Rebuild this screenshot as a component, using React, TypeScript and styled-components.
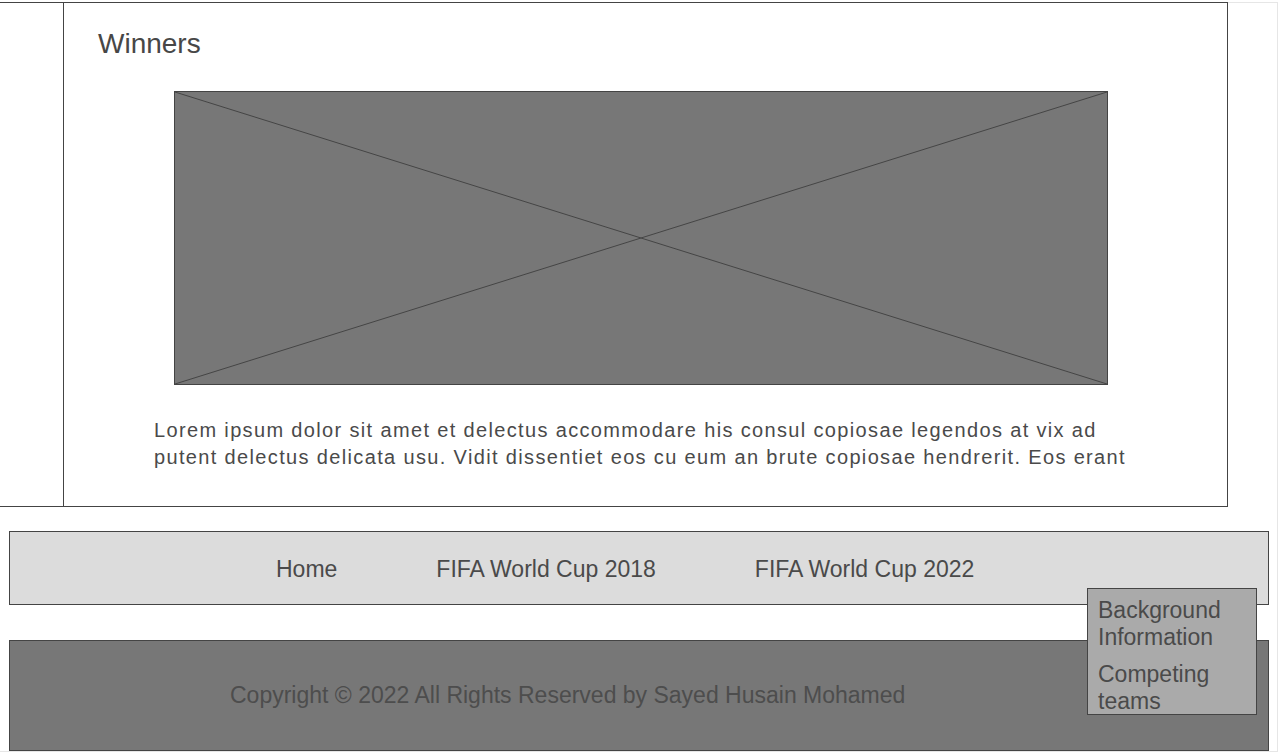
import styled, { createGlobalStyle } from "styled-components";

const GlobalStyle = createGlobalStyle`
  html, body {
    margin: 0;
    padding: 0;
    background: #ffffff;
    overflow: hidden;
  }
  body {
    font-family: "Liberation Sans", Arial, sans-serif;
    color: #4a4a4a;
  }
  * {
    box-sizing: border-box;
  }
`;

const navLinks = ["Home", "FIFA World Cup 2018", "FIFA World Cup 2022"];
const dropdownLinks = ["Background Information", "Competing teams"];

const App = () => {
  return (
    <>
      <GlobalStyle />
      <Page>
        <MainPanel>
          <Sidebar />
          <Content>
            <Heading>Winners</Heading>
            <Placeholder>
              <svg width="100%" height="100%" viewBox="0 0 932 292" preserveAspectRatio="none">
                <line x1="0" y1="0" x2="932" y2="292" stroke="#454545" strokeWidth="1" />
                <line x1="932" y1="0" x2="0" y2="292" stroke="#454545" strokeWidth="1" />
              </svg>
            </Placeholder>
            <Paragraph>
              Lorem ipsum dolor sit amet et delectus accommodare his consul copiosae legendos at vix ad putent
              delectus delicata usu. Vidit dissentiet eos cu eum an brute copiosae hendrerit. Eos erant
            </Paragraph>
          </Content>
        </MainPanel>

        <NavBar>
          {navLinks.map((link) => (
            <NavLink key={link}>{link}</NavLink>
          ))}
          <Dropdown>
            {dropdownLinks.map((link) => (
              <DropdownItem key={link}>{link}</DropdownItem>
            ))}
          </Dropdown>
        </NavBar>

        <Footer>
          <Copyright>Copyright © 2022 All Rights Reserved by Sayed Husain Mohamed</Copyright>
        </Footer>
      </Page>
    </>
  );
};

export default App;

const Page = styled.div`
  width: 1278px;
  height: 750px;
  margin-top: 2px;
  border-top: 1px solid #e6e6e6;
  border-right: 1px solid #e6e6e6;
  border-bottom: 1px solid #e6e6e6;
`;

const MainPanel = styled.section`
  display: grid;
  grid-template-columns: 64px 1fr;
  width: 1229px;
  height: 505px;
  margin-top: -1px;
  margin-left: -1px;
  border: 1px solid #444444;
  overflow: hidden;
`;

const Sidebar = styled.aside`
  border-right: 1px solid #444444;
`;

const Content = styled.div`
  display: flex;
  flex-direction: column;
  padding: 25px 0 0 34px;
  overflow: hidden;
`;

const Heading = styled.h1`
  margin: 0;
  font-size: 28px;
  font-weight: normal;
  line-height: 32px;
  color: #474747;
`;

const Placeholder = styled.div`
  width: 934px;
  height: 294px;
  margin: 31px 0 0 76px;
  background: #777777;
  border: 1px solid #444444;

  svg {
    display: block;
  }
`;

const Paragraph = styled.p`
  width: 1000px;
  margin: 32px 0 0 56px;
  font-size: 20px;
  letter-spacing: 1.35px;
  line-height: 27px;
  color: #4a4a4a;
`;

const NavBar = styled.nav`
  position: relative;
  display: flex;
  align-items: center;
  gap: 99px;
  width: 1260px;
  height: 74px;
  margin: 24px 0 0 9px;
  padding: 2px 0 0 266px;
  background: #dcdcdc;
  border: 1px solid #444444;
`;

const NavLink = styled.a`
  font-size: 23px;
  color: #4a4a4a;
  cursor: pointer;
`;

const Dropdown = styled.div`
  position: absolute;
  top: 56px;
  left: 1077px;
  z-index: 2;
  display: flex;
  flex-direction: column;
  gap: 10px;
  width: 170px;
  height: 127px;
  padding: 8px 10px 0;
  background: #aaaaaa;
  border: 1px solid #444444;
`;

const DropdownItem = styled.a`
  font-size: 23px;
  line-height: 27px;
  color: #4a4a4a;
  cursor: pointer;
`;

const Footer = styled.footer`
  display: flex;
  align-items: center;
  width: 1260px;
  height: 111px;
  margin: 35px 0 0 9px;
  padding-left: 220px;
  background: #777777;
  border: 1px solid #444444;
`;

const Copyright = styled.p`
  margin: 0;
  font-size: 23px;
  color: #4d4d4d;
`;
